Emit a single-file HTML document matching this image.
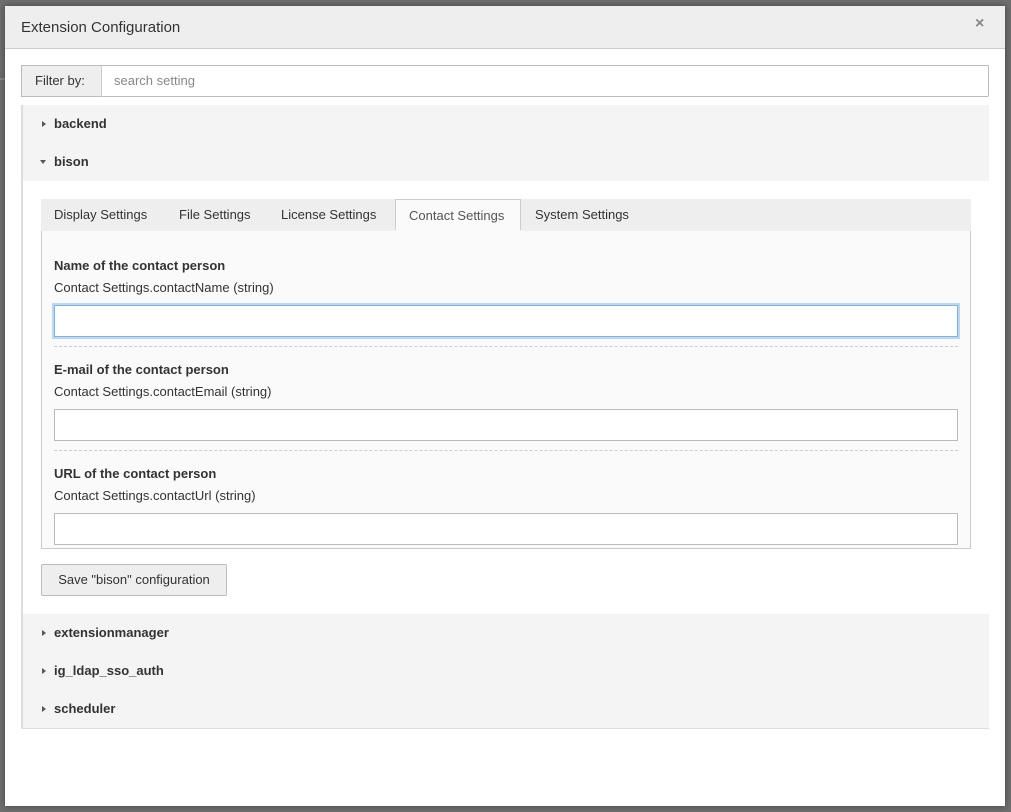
<!DOCTYPE html><html><head><style>
body{margin:0;width:1011px;height:812px;background:#6e6e6e;font-family:"Liberation Sans",sans-serif;font-size:13px;color:#333;position:relative;overflow:hidden}
.a{position:absolute;box-sizing:border-box}
.row{left:23px;width:966px;height:38px;background:#f4f4f4;font-weight:bold;color:#333;line-height:38px;padding-left:31px}
.row i{position:absolute;left:19px;top:16px;width:0;height:0;border-left:4px solid #555;border-top:3.5px solid transparent;border-bottom:3.5px solid transparent}
.inp{left:54px;width:904px;height:32px;background:#fff;border:1px solid #bbb}
.lb{left:54px;font-weight:bold}
.ds{left:54px}
.hr{left:54px;width:904px;border-top:1px dashed #ccc;height:0}
.tab{top:199px;height:32px;line-height:31px;padding:0 13px}
</style></head><body>
<div class="a" style="left:0;top:78px;width:5px;height:2px;background:#888"></div>
<div class="a" style="left:5px;top:6px;width:1000px;height:800px;background:#fff;box-shadow:0 0 6px rgba(0,0,0,.4)"></div>
<div class="a" style="left:5px;top:6px;width:1000px;height:43px;background:#eee;border-bottom:1px solid #ccc"></div>
<div class="a" style="left:21px;top:19px;font-size:15px;color:#333">Extension Configuration</div>
<div class="a" style="left:975px;top:15px;font-size:16px;font-weight:bold;color:#888">×</div>
<div class="a" style="left:21px;top:65px;width:968px;height:32px;border:1px solid #bbb;border-radius:2px"></div>
<div class="a" style="left:21px;top:65px;width:81px;height:32px;background:#eee;border:1px solid #bbb;border-right:1px solid #ccc;line-height:30px;padding-left:13px">Filter by:</div>
<div class="a" style="left:114px;top:73px;color:#888">search setting</div>
<div class="a" style="left:21px;top:105px;width:968px;height:624px;border-left:2px solid #ddd;border-bottom:2px solid #ddd;background:#fff"></div>
<div class="a row" style="top:105px"><i></i>backend</div>
<div class="a row" style="top:143px"><i style="left:17px;top:17px;border-top:4px solid #555;border-left:3.5px solid transparent;border-right:3.5px solid transparent;border-bottom:0"></i>bison</div>
<div class="a" style="left:41px;top:199px;width:930px;height:33px;background:#eee;border-bottom:1px solid #ccc"></div>
<div class="a tab" style="left:41px">Display Settings</div>
<div class="a tab" style="left:166px">File Settings</div>
<div class="a tab" style="left:268px">License Settings</div>
<div class="a tab" style="left:395px;width:126px;background:#fafafa;border:1px solid #ccc;border-bottom:none;height:33px;color:#555">Contact Settings</div>
<div class="a tab" style="left:522px">System Settings</div>
<div class="a" style="left:41px;top:231px;width:930px;height:318px;background:#fafafa;border:1px solid #ccc;border-top:none"></div>
<div class="a" style="left:395px;top:230px;width:126px;height:2px;background:#fafafa"></div>
<div class="a lb" style="top:258px">Name of the contact person</div>
<div class="a ds" style="top:280px">Contact Settings.contactName (string)</div>
<div class="a inp" style="top:305px;border-color:#7fb2e5;box-shadow:0 0 0 2px #bcd7f2"></div>
<div class="a hr" style="top:346px"></div>
<div class="a lb" style="top:362px">E-mail of the contact person</div>
<div class="a ds" style="top:384px">Contact Settings.contactEmail (string)</div>
<div class="a inp" style="top:409px"></div>
<div class="a hr" style="top:450px"></div>
<div class="a lb" style="top:466px">URL of the contact person</div>
<div class="a ds" style="top:488px">Contact Settings.contactUrl (string)</div>
<div class="a inp" style="top:513px"></div>
<div class="a" style="left:41px;top:564px;width:186px;height:32px;background:#eee;border:1px solid #bbb;border-radius:2px;line-height:30px;text-align:center">Save "bison" configuration</div>
<div class="a row" style="top:614px"><i></i>extensionmanager</div>
<div class="a row" style="top:652px"><i></i>ig_ldap_sso_auth</div>
<div class="a row" style="top:690px"><i></i>scheduler</div>
</body></html>
